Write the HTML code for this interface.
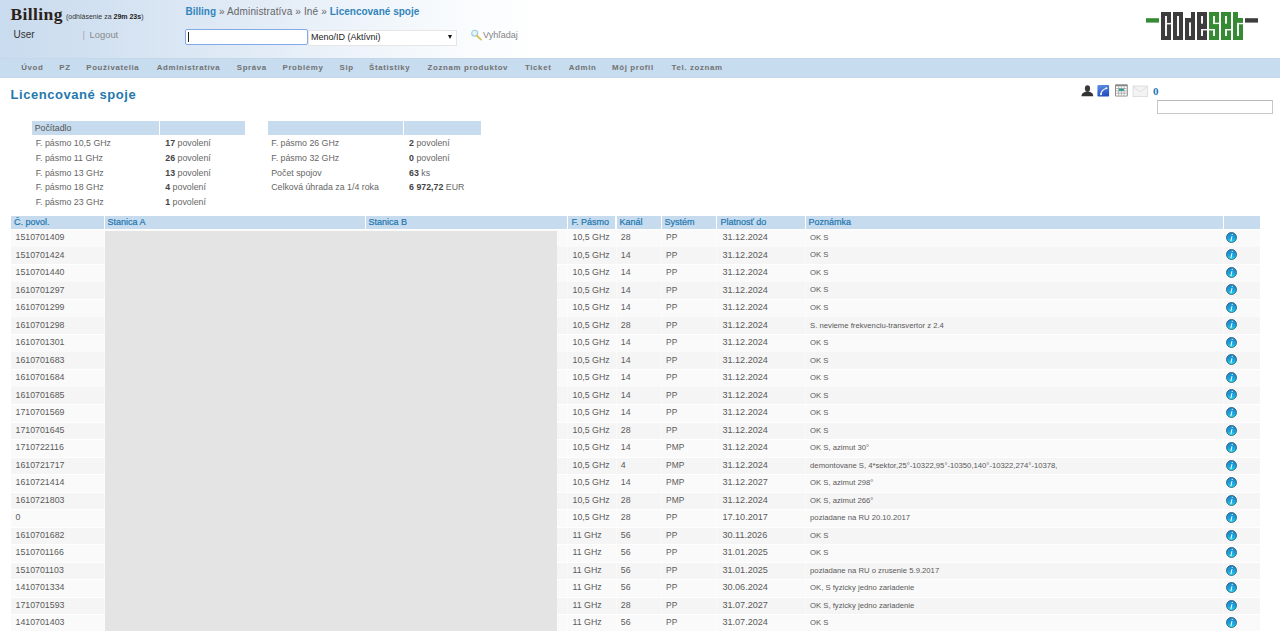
<!DOCTYPE html>
<html><head><meta charset="utf-8"><title>Licencované spoje</title>
<style>
html,body{margin:0;padding:0;background:#fff;width:1280px;height:631px;overflow:hidden;position:relative;font-family:"Liberation Sans",sans-serif;}
.abs{position:absolute;white-space:nowrap;}
#hdr{position:absolute;left:0;top:0;width:1280px;height:58px;background:linear-gradient(90deg,#c9dbee 0px,#d8e5f3 160px,#e7eff8 300px,#f8fbfd 450px,#ffffff 540px);}
#nav{position:absolute;left:0;top:57.5px;width:1280px;height:20px;background:linear-gradient(180deg,#c3d6e8 0,#c7dcee 1.5px,#c7dcee 18.5px,#c4d7e8 20px);}
.nv{position:absolute;top:63.3px;font:bold 7.9px "Liberation Sans",sans-serif;letter-spacing:0.62px;color:#727272;white-space:nowrap;line-height:10px;}
.cellbg{position:absolute;}
.t{position:absolute;white-space:nowrap;line-height:10px;}
.hd{position:absolute;white-space:nowrap;font:9px "Liberation Sans",sans-serif;-webkit-text-stroke:0.2px #2276b0;color:#2276b0;line-height:10px;}
.ct{position:absolute;white-space:nowrap;font:8.8px "Liberation Sans",sans-serif;color:#666;line-height:10px;}
.ct b{color:#444;}
</style></head><body>

<div id="hdr"></div>
<svg width="0" height="0" style="position:absolute"><defs><linearGradient id="ig" x1="0" y1="0" x2="0" y2="1"><stop offset="0" stop-color="#1e86c8"/><stop offset="0.55" stop-color="#1aa0da"/><stop offset="1" stop-color="#22e0f0"/></linearGradient></defs></svg>
<div class="abs" style="left:10.5px;top:4px;font:bold 17.5px 'Liberation Serif',serif;letter-spacing:0.4px;color:#2b2119;line-height:20px;">Billing</div>
<div class="abs" style="left:66px;top:12px;font:7px 'Liberation Sans',sans-serif;color:#333;line-height:10px;">(odhlásenie za <b style="color:#222">29m 23s</b>)</div>
<div class="abs" style="left:13.5px;top:28.5px;font:10px 'Liberation Sans',sans-serif;color:#333;line-height:12px;">User</div>
<div class="abs" style="left:82.5px;top:28.5px;font:9.4px 'Liberation Sans',sans-serif;color:#8a8a8a;line-height:12px;"><span style="color:#a9a0b0;margin-right:2px">|</span> Logout</div>
<div class="abs" style="left:185.5px;top:5.5px;font:10px 'Liberation Sans',sans-serif;color:#666;line-height:12px;"><b style="color:#3285bb">Billing</b><span style="letter-spacing:0.14px"> » Administratíva » Iné » </span><b style="color:#3285bb">Licencované spoje</b></div>
<div class="abs" style="left:185px;top:28.5px;width:121px;height:14.5px;border:1px solid #82aaea;border-radius:2px;background:#fff;"></div>
<div class="abs" style="left:188px;top:32px;width:1px;height:9.5px;background:#222;"></div>
<div class="abs" style="left:307.5px;top:29.5px;width:147.5px;height:14.5px;border:1px solid #e6e6e6;background:#fff;"></div>
<div class="abs" style="left:311px;top:31px;font:9px 'Liberation Sans',sans-serif;color:#222;line-height:12px;">Meno/ID (Aktívni)</div>
<div class="abs" style="left:447.5px;top:35px;width:0;height:0;border-left:2.2px solid transparent;border-right:2.2px solid transparent;border-top:4px solid #111;"></div>
<svg class="abs" style="left:470px;top:29px" width="14" height="13" viewBox="0 0 14 13">
<circle cx="4.7" cy="4.3" r="3" fill="#e2f5fb" stroke="#a2cadb" stroke-width="1.1"/>
<line x1="6.7" y1="6.5" x2="11" y2="10.6" stroke="#d6c35a" stroke-width="1.8" stroke-linecap="round"/></svg>
<div class="abs" style="left:483px;top:28.5px;font:9px 'Liberation Sans',sans-serif;color:#858585;line-height:12px;">Vyhľadaj</div>
<svg class="abs" style="left:0;top:0" width="1280" height="58" viewBox="0 0 1280 58"><rect x="1146" y="18.2" width="13.00" height="4.40" fill="#378a34"/><rect x="1245" y="18.2" width="13.00" height="4.40" fill="#3d3d3d"/><rect x="1161" y="12" width="10.00" height="28.00" fill="#3d3d3d"/><rect x="1165" y="16" width="2.00" height="20.00" fill="#f4f4f4"/><rect x="1165" y="22.9" width="6.00" height="1.50" fill="#f4f4f4"/><rect x="1173" y="12" width="10.00" height="28.00" fill="#3d3d3d"/><rect x="1177" y="16" width="2.00" height="20.00" fill="#f4f4f4"/><rect x="1185" y="18" width="10.00" height="22.00" fill="#3d3d3d"/><rect x="1191" y="12" width="4.00" height="6.10" fill="#3d3d3d"/><rect x="1189" y="22.4" width="2.00" height="13.60" fill="#f4f4f4"/><rect x="1197" y="12" width="10.00" height="28.00" fill="#3d3d3d"/><rect x="1201" y="16" width="2.00" height="7.70" fill="#f4f4f4"/><rect x="1201" y="29" width="6.00" height="1.40" fill="#f4f4f4"/><rect x="1201" y="29" width="2.00" height="7.00" fill="#f4f4f4"/><rect x="1209" y="12" width="10.00" height="28.00" fill="#378a34"/><rect x="1213" y="16" width="2.00" height="7.90" fill="#f4f4f4"/><rect x="1213" y="22.7" width="6.00" height="1.40" fill="#f4f4f4"/><rect x="1207" y="29" width="8.00" height="1.40" fill="#f4f4f4"/><rect x="1213" y="29" width="2.00" height="7.00" fill="#f4f4f4"/><rect x="1221" y="12" width="10.00" height="28.00" fill="#378a34"/><rect x="1225" y="16" width="2.00" height="7.70" fill="#f4f4f4"/><rect x="1225" y="29" width="6.00" height="1.40" fill="#f4f4f4"/><rect x="1225" y="29" width="2.00" height="7.00" fill="#f4f4f4"/><rect x="1233" y="12" width="5.00" height="28.00" fill="#378a34"/><rect x="1238" y="18" width="5.00" height="22.00" fill="#378a34"/><rect x="1237" y="22.9" width="6.00" height="1.40" fill="#f4f4f4"/><rect x="1237" y="22.9" width="2.00" height="13.10" fill="#f4f4f4"/></svg>
<div id="nav"></div>
<div class="nv" style="left:21.25px">Úvod</div>
<div class="nv" style="left:59.25px">PZ</div>
<div class="nv" style="left:86.25px">Používatelia</div>
<div class="nv" style="left:156.75px">Administratíva</div>
<div class="nv" style="left:236.75px">Správa</div>
<div class="nv" style="left:282.5px">Problémy</div>
<div class="nv" style="left:339.5px">Sip</div>
<div class="nv" style="left:369px">Štatistiky</div>
<div class="nv" style="left:427.6px">Zoznam produktov</div>
<div class="nv" style="left:525px">Ticket</div>
<div class="nv" style="left:568.8px">Admin</div>
<div class="nv" style="left:612px">Môj profil</div>
<div class="nv" style="left:671.6px">Tel. zoznam</div>
<div class="abs" style="left:10.5px;top:86.8px;font:bold 13px 'Liberation Sans',sans-serif;letter-spacing:0.55px;color:#2678ac;line-height:16px;">Licencované spoje</div>
<svg class="abs" style="left:1080px;top:83px" width="82" height="16" viewBox="0 0 82 16">
<defs><linearGradient id="phg" x1="0" y1="0" x2="0.3" y2="1"><stop offset="0" stop-color="#5f93e6"/><stop offset="1" stop-color="#2450bf"/></linearGradient></defs>
<ellipse cx="7.5" cy="5.6" rx="2.6" ry="3.3" fill="#3a3a3a"/>
<path d="M1.4 13.2 C1.8 10.2 4.5 8.6 7.5 8.6 C10.5 8.6 13.2 10.2 13.2 13.2 Z" fill="#333"/>
<rect x="17.4" y="2.1" width="11.7" height="11.5" rx="0.8" fill="url(#phg)"/>
<path d="M20.9 11.2 Q21.3 7.2 26.2 5.3" stroke="#f4f4f4" stroke-width="1.2" fill="none"/>
<circle cx="21" cy="11.3" r="1.05" fill="#f4f4f4"/><circle cx="26.4" cy="5.2" r="1.05" fill="#f4f4f4"/>
<rect x="35" y="1.2" width="12.8" height="12.4" rx="1" fill="#8a8a8a"/>
<rect x="36" y="3.3" width="10.8" height="9.3" fill="#fff"/>
<path d="M36 5.6H46.8M36 7.9H46.8M36 10.2H46.8M38.7 3.3V12.6M41.4 3.3V12.6M44.1 3.3V12.6" stroke="#999" stroke-width="0.7"/>
<rect x="38.9" y="5.7" width="5" height="2.1" fill="#2a9a8a"/>
<rect x="53" y="3" width="14.6" height="10.6" fill="#f3f3f3" stroke="#dcdcdc" stroke-width="0.9"/>
<path d="M53.3 3.5L60.3 9L67.3 3.5" stroke="#dcdcdc" stroke-width="0.9" fill="none"/>
</svg>
<div class="abs" style="left:1153px;top:85px;font:bold 11px 'Liberation Serif',serif;color:#2777b3;line-height:12px;">0</div>
<div class="abs" style="left:1156.5px;top:100px;width:114.5px;height:11.5px;border:1px solid #c8c8c8;border-top-color:#b8b8b8;background:#fff;"></div>
<div class="cellbg" style="left:32.2px;top:121.2px;width:126.55px;height:13.5px;background:#c6dcee"></div>
<div class="cellbg" style="left:160.25px;top:121.2px;width:84.35px;height:13.5px;background:#c6dcee"></div>
<div class="ct" style="left:34.7px;top:123px;color:#555">Počítadlo</div>
<div class="ct" style="left:35.7px;top:138.00px">F. pásmo 10,5 GHz</div>
<div class="ct" style="left:165.25px;top:138.00px"><b>17</b> povolení</div>
<div class="ct" style="left:35.7px;top:152.80px">F. pásmo 11 GHz</div>
<div class="ct" style="left:165.25px;top:152.80px"><b>26</b> povolení</div>
<div class="ct" style="left:35.7px;top:167.60px">F. pásmo 13 GHz</div>
<div class="ct" style="left:165.25px;top:167.60px"><b>13</b> povolení</div>
<div class="ct" style="left:35.7px;top:182.40px">F. pásmo 18 GHz</div>
<div class="ct" style="left:165.25px;top:182.40px"><b>4</b> povolení</div>
<div class="ct" style="left:35.7px;top:197.20px">F. pásmo 23 GHz</div>
<div class="ct" style="left:165.25px;top:197.20px"><b>1</b> povolení</div>
<div class="cellbg" style="left:267.75px;top:121.2px;width:134.85000000000002px;height:13.5px;background:#c6dcee"></div>
<div class="cellbg" style="left:404.1px;top:121.2px;width:76.89999999999998px;height:13.5px;background:#c6dcee"></div>
<div class="ct" style="left:271.25px;top:138.00px">F. pásmo 26 GHz</div>
<div class="ct" style="left:409.1px;top:138.00px"><b>2</b> povolení</div>
<div class="ct" style="left:271.25px;top:152.80px">F. pásmo 32 GHz</div>
<div class="ct" style="left:409.1px;top:152.80px"><b>0</b> povolení</div>
<div class="ct" style="left:271.25px;top:167.60px">Počet spojov</div>
<div class="ct" style="left:409.1px;top:167.60px"><b>63</b> ks</div>
<div class="ct" style="left:271.25px;top:182.40px">Celková úhrada za 1/4 roka</div>
<div class="ct" style="left:409.1px;top:182.40px"><b>6 972,72</b> EUR</div>
<div class="cellbg" style="left:11px;top:215.8px;width:92.50px;height:13.20px;background:#c6dcee"></div>
<div class="hd" style="left:14.00px;top:216.5px">Č. povol.</div>
<div class="cellbg" style="left:104.5px;top:215.8px;width:260.00px;height:13.20px;background:#c6dcee"></div>
<div class="hd" style="left:107.50px;top:216.5px">Stanica A</div>
<div class="cellbg" style="left:365.5px;top:215.8px;width:201.90px;height:13.20px;background:#c6dcee"></div>
<div class="hd" style="left:368.50px;top:216.5px">Stanica B</div>
<div class="cellbg" style="left:568.4px;top:215.8px;width:47.10px;height:13.20px;background:#c6dcee"></div>
<div class="hd" style="left:571.40px;top:216.5px">F. Pásmo</div>
<div class="cellbg" style="left:616.5px;top:215.8px;width:44.10px;height:13.20px;background:#c6dcee"></div>
<div class="hd" style="left:619.50px;top:216.5px">Kanál</div>
<div class="cellbg" style="left:661.6px;top:215.8px;width:54.80px;height:13.20px;background:#c6dcee"></div>
<div class="hd" style="left:664.60px;top:216.5px">Systém</div>
<div class="cellbg" style="left:717.4px;top:215.8px;width:87.20px;height:13.20px;background:#c6dcee"></div>
<div class="hd" style="left:720.40px;top:216.5px">Platnosť do</div>
<div class="cellbg" style="left:805.6px;top:215.8px;width:417.80px;height:13.20px;background:#c6dcee"></div>
<div class="hd" style="left:808.60px;top:216.5px">Poznámka</div>
<div class="cellbg" style="left:1224.4px;top:215.8px;width:35.60px;height:13.20px;background:#c6dcee"></div>
<div class="cellbg" style="left:11px;top:229.80px;width:1249.00px;height:16.72px;background:#fafafa"></div>
<div class="t" style="left:15.5px;top:232.00px;font:8.8px 'Liberation Sans',sans-serif;color:#5a5a5a">1510701409</div>
<div class="t" style="left:572.5px;top:232.00px;font:8.8px 'Liberation Sans',sans-serif;color:#5a5a5a">10,5 GHz</div>
<div class="t" style="left:620.8px;top:232.00px;font:8.8px 'Liberation Sans',sans-serif;color:#5a5a5a">28</div>
<div class="t" style="left:666.1px;top:232.00px;font:8.4px 'Liberation Sans',sans-serif;color:#5a5a5a">PP</div>
<div class="t" style="left:722.4px;top:232.00px;font:9.1px 'Liberation Sans',sans-serif;color:#5a5a5a">31.12.2024</div>
<div class="t" style="left:810.1px;top:232.90px;font:7.7px 'Liberation Sans',sans-serif;color:#595959">OK S</div>
<svg class="abs" style="left:1226px;top:231.80px" width="11" height="11" viewBox="0 0 11 11"><circle cx="5.5" cy="5.5" r="5" fill="url(#ig)" stroke="#24506f" stroke-width="0.8"/><path d="M6.2 2.4 L6.35 2.3 M5.9 4.5 L5 8.6" stroke="#e8fbff" stroke-width="1.1" stroke-linecap="round"/></svg>
<div class="cellbg" style="left:11px;top:247.32px;width:1249.00px;height:16.72px;background:#f5f5f5"></div>
<div class="t" style="left:15.5px;top:249.52px;font:8.8px 'Liberation Sans',sans-serif;color:#5a5a5a">1510701424</div>
<div class="t" style="left:572.5px;top:249.52px;font:8.8px 'Liberation Sans',sans-serif;color:#5a5a5a">10,5 GHz</div>
<div class="t" style="left:620.8px;top:249.52px;font:8.8px 'Liberation Sans',sans-serif;color:#5a5a5a">14</div>
<div class="t" style="left:666.1px;top:249.52px;font:8.4px 'Liberation Sans',sans-serif;color:#5a5a5a">PP</div>
<div class="t" style="left:722.4px;top:249.52px;font:9.1px 'Liberation Sans',sans-serif;color:#5a5a5a">31.12.2024</div>
<div class="t" style="left:810.1px;top:250.42px;font:7.7px 'Liberation Sans',sans-serif;color:#595959">OK S</div>
<svg class="abs" style="left:1226px;top:249.32px" width="11" height="11" viewBox="0 0 11 11"><circle cx="5.5" cy="5.5" r="5" fill="url(#ig)" stroke="#24506f" stroke-width="0.8"/><path d="M6.2 2.4 L6.35 2.3 M5.9 4.5 L5 8.6" stroke="#e8fbff" stroke-width="1.1" stroke-linecap="round"/></svg>
<div class="cellbg" style="left:11px;top:264.84px;width:1249.00px;height:16.72px;background:#fafafa"></div>
<div class="t" style="left:15.5px;top:267.04px;font:8.8px 'Liberation Sans',sans-serif;color:#5a5a5a">1510701440</div>
<div class="t" style="left:572.5px;top:267.04px;font:8.8px 'Liberation Sans',sans-serif;color:#5a5a5a">10,5 GHz</div>
<div class="t" style="left:620.8px;top:267.04px;font:8.8px 'Liberation Sans',sans-serif;color:#5a5a5a">14</div>
<div class="t" style="left:666.1px;top:267.04px;font:8.4px 'Liberation Sans',sans-serif;color:#5a5a5a">PP</div>
<div class="t" style="left:722.4px;top:267.04px;font:9.1px 'Liberation Sans',sans-serif;color:#5a5a5a">31.12.2024</div>
<div class="t" style="left:810.1px;top:267.94px;font:7.7px 'Liberation Sans',sans-serif;color:#595959">OK S</div>
<svg class="abs" style="left:1226px;top:266.84px" width="11" height="11" viewBox="0 0 11 11"><circle cx="5.5" cy="5.5" r="5" fill="url(#ig)" stroke="#24506f" stroke-width="0.8"/><path d="M6.2 2.4 L6.35 2.3 M5.9 4.5 L5 8.6" stroke="#e8fbff" stroke-width="1.1" stroke-linecap="round"/></svg>
<div class="cellbg" style="left:11px;top:282.36px;width:1249.00px;height:16.72px;background:#f5f5f5"></div>
<div class="t" style="left:15.5px;top:284.56px;font:8.8px 'Liberation Sans',sans-serif;color:#5a5a5a">1610701297</div>
<div class="t" style="left:572.5px;top:284.56px;font:8.8px 'Liberation Sans',sans-serif;color:#5a5a5a">10,5 GHz</div>
<div class="t" style="left:620.8px;top:284.56px;font:8.8px 'Liberation Sans',sans-serif;color:#5a5a5a">14</div>
<div class="t" style="left:666.1px;top:284.56px;font:8.4px 'Liberation Sans',sans-serif;color:#5a5a5a">PP</div>
<div class="t" style="left:722.4px;top:284.56px;font:9.1px 'Liberation Sans',sans-serif;color:#5a5a5a">31.12.2024</div>
<div class="t" style="left:810.1px;top:285.46px;font:7.7px 'Liberation Sans',sans-serif;color:#595959">OK S</div>
<svg class="abs" style="left:1226px;top:284.36px" width="11" height="11" viewBox="0 0 11 11"><circle cx="5.5" cy="5.5" r="5" fill="url(#ig)" stroke="#24506f" stroke-width="0.8"/><path d="M6.2 2.4 L6.35 2.3 M5.9 4.5 L5 8.6" stroke="#e8fbff" stroke-width="1.1" stroke-linecap="round"/></svg>
<div class="cellbg" style="left:11px;top:299.88px;width:1249.00px;height:16.72px;background:#fafafa"></div>
<div class="t" style="left:15.5px;top:302.08px;font:8.8px 'Liberation Sans',sans-serif;color:#5a5a5a">1610701299</div>
<div class="t" style="left:572.5px;top:302.08px;font:8.8px 'Liberation Sans',sans-serif;color:#5a5a5a">10,5 GHz</div>
<div class="t" style="left:620.8px;top:302.08px;font:8.8px 'Liberation Sans',sans-serif;color:#5a5a5a">14</div>
<div class="t" style="left:666.1px;top:302.08px;font:8.4px 'Liberation Sans',sans-serif;color:#5a5a5a">PP</div>
<div class="t" style="left:722.4px;top:302.08px;font:9.1px 'Liberation Sans',sans-serif;color:#5a5a5a">31.12.2024</div>
<div class="t" style="left:810.1px;top:302.98px;font:7.7px 'Liberation Sans',sans-serif;color:#595959">OK S</div>
<svg class="abs" style="left:1226px;top:301.88px" width="11" height="11" viewBox="0 0 11 11"><circle cx="5.5" cy="5.5" r="5" fill="url(#ig)" stroke="#24506f" stroke-width="0.8"/><path d="M6.2 2.4 L6.35 2.3 M5.9 4.5 L5 8.6" stroke="#e8fbff" stroke-width="1.1" stroke-linecap="round"/></svg>
<div class="cellbg" style="left:11px;top:317.40px;width:1249.00px;height:16.72px;background:#f5f5f5"></div>
<div class="t" style="left:15.5px;top:319.60px;font:8.8px 'Liberation Sans',sans-serif;color:#5a5a5a">1610701298</div>
<div class="t" style="left:572.5px;top:319.60px;font:8.8px 'Liberation Sans',sans-serif;color:#5a5a5a">10,5 GHz</div>
<div class="t" style="left:620.8px;top:319.60px;font:8.8px 'Liberation Sans',sans-serif;color:#5a5a5a">28</div>
<div class="t" style="left:666.1px;top:319.60px;font:8.4px 'Liberation Sans',sans-serif;color:#5a5a5a">PP</div>
<div class="t" style="left:722.4px;top:319.60px;font:9.1px 'Liberation Sans',sans-serif;color:#5a5a5a">31.12.2024</div>
<div class="t" style="left:810.1px;top:320.50px;font:7.7px 'Liberation Sans',sans-serif;color:#595959">S. nevieme frekvenciu-transvertor z 2.4</div>
<svg class="abs" style="left:1226px;top:319.40px" width="11" height="11" viewBox="0 0 11 11"><circle cx="5.5" cy="5.5" r="5" fill="url(#ig)" stroke="#24506f" stroke-width="0.8"/><path d="M6.2 2.4 L6.35 2.3 M5.9 4.5 L5 8.6" stroke="#e8fbff" stroke-width="1.1" stroke-linecap="round"/></svg>
<div class="cellbg" style="left:11px;top:334.92px;width:1249.00px;height:16.72px;background:#fafafa"></div>
<div class="t" style="left:15.5px;top:337.12px;font:8.8px 'Liberation Sans',sans-serif;color:#5a5a5a">1610701301</div>
<div class="t" style="left:572.5px;top:337.12px;font:8.8px 'Liberation Sans',sans-serif;color:#5a5a5a">10,5 GHz</div>
<div class="t" style="left:620.8px;top:337.12px;font:8.8px 'Liberation Sans',sans-serif;color:#5a5a5a">14</div>
<div class="t" style="left:666.1px;top:337.12px;font:8.4px 'Liberation Sans',sans-serif;color:#5a5a5a">PP</div>
<div class="t" style="left:722.4px;top:337.12px;font:9.1px 'Liberation Sans',sans-serif;color:#5a5a5a">31.12.2024</div>
<div class="t" style="left:810.1px;top:338.02px;font:7.7px 'Liberation Sans',sans-serif;color:#595959">OK S</div>
<svg class="abs" style="left:1226px;top:336.92px" width="11" height="11" viewBox="0 0 11 11"><circle cx="5.5" cy="5.5" r="5" fill="url(#ig)" stroke="#24506f" stroke-width="0.8"/><path d="M6.2 2.4 L6.35 2.3 M5.9 4.5 L5 8.6" stroke="#e8fbff" stroke-width="1.1" stroke-linecap="round"/></svg>
<div class="cellbg" style="left:11px;top:352.44px;width:1249.00px;height:16.72px;background:#f5f5f5"></div>
<div class="t" style="left:15.5px;top:354.64px;font:8.8px 'Liberation Sans',sans-serif;color:#5a5a5a">1610701683</div>
<div class="t" style="left:572.5px;top:354.64px;font:8.8px 'Liberation Sans',sans-serif;color:#5a5a5a">10,5 GHz</div>
<div class="t" style="left:620.8px;top:354.64px;font:8.8px 'Liberation Sans',sans-serif;color:#5a5a5a">14</div>
<div class="t" style="left:666.1px;top:354.64px;font:8.4px 'Liberation Sans',sans-serif;color:#5a5a5a">PP</div>
<div class="t" style="left:722.4px;top:354.64px;font:9.1px 'Liberation Sans',sans-serif;color:#5a5a5a">31.12.2024</div>
<div class="t" style="left:810.1px;top:355.54px;font:7.7px 'Liberation Sans',sans-serif;color:#595959">OK S</div>
<svg class="abs" style="left:1226px;top:354.44px" width="11" height="11" viewBox="0 0 11 11"><circle cx="5.5" cy="5.5" r="5" fill="url(#ig)" stroke="#24506f" stroke-width="0.8"/><path d="M6.2 2.4 L6.35 2.3 M5.9 4.5 L5 8.6" stroke="#e8fbff" stroke-width="1.1" stroke-linecap="round"/></svg>
<div class="cellbg" style="left:11px;top:369.96px;width:1249.00px;height:16.72px;background:#fafafa"></div>
<div class="t" style="left:15.5px;top:372.16px;font:8.8px 'Liberation Sans',sans-serif;color:#5a5a5a">1610701684</div>
<div class="t" style="left:572.5px;top:372.16px;font:8.8px 'Liberation Sans',sans-serif;color:#5a5a5a">10,5 GHz</div>
<div class="t" style="left:620.8px;top:372.16px;font:8.8px 'Liberation Sans',sans-serif;color:#5a5a5a">14</div>
<div class="t" style="left:666.1px;top:372.16px;font:8.4px 'Liberation Sans',sans-serif;color:#5a5a5a">PP</div>
<div class="t" style="left:722.4px;top:372.16px;font:9.1px 'Liberation Sans',sans-serif;color:#5a5a5a">31.12.2024</div>
<div class="t" style="left:810.1px;top:373.06px;font:7.7px 'Liberation Sans',sans-serif;color:#595959">OK S</div>
<svg class="abs" style="left:1226px;top:371.96px" width="11" height="11" viewBox="0 0 11 11"><circle cx="5.5" cy="5.5" r="5" fill="url(#ig)" stroke="#24506f" stroke-width="0.8"/><path d="M6.2 2.4 L6.35 2.3 M5.9 4.5 L5 8.6" stroke="#e8fbff" stroke-width="1.1" stroke-linecap="round"/></svg>
<div class="cellbg" style="left:11px;top:387.48px;width:1249.00px;height:16.72px;background:#f5f5f5"></div>
<div class="t" style="left:15.5px;top:389.68px;font:8.8px 'Liberation Sans',sans-serif;color:#5a5a5a">1610701685</div>
<div class="t" style="left:572.5px;top:389.68px;font:8.8px 'Liberation Sans',sans-serif;color:#5a5a5a">10,5 GHz</div>
<div class="t" style="left:620.8px;top:389.68px;font:8.8px 'Liberation Sans',sans-serif;color:#5a5a5a">14</div>
<div class="t" style="left:666.1px;top:389.68px;font:8.4px 'Liberation Sans',sans-serif;color:#5a5a5a">PP</div>
<div class="t" style="left:722.4px;top:389.68px;font:9.1px 'Liberation Sans',sans-serif;color:#5a5a5a">31.12.2024</div>
<div class="t" style="left:810.1px;top:390.58px;font:7.7px 'Liberation Sans',sans-serif;color:#595959">OK S</div>
<svg class="abs" style="left:1226px;top:389.48px" width="11" height="11" viewBox="0 0 11 11"><circle cx="5.5" cy="5.5" r="5" fill="url(#ig)" stroke="#24506f" stroke-width="0.8"/><path d="M6.2 2.4 L6.35 2.3 M5.9 4.5 L5 8.6" stroke="#e8fbff" stroke-width="1.1" stroke-linecap="round"/></svg>
<div class="cellbg" style="left:11px;top:405.00px;width:1249.00px;height:16.72px;background:#fafafa"></div>
<div class="t" style="left:15.5px;top:407.20px;font:8.8px 'Liberation Sans',sans-serif;color:#5a5a5a">1710701569</div>
<div class="t" style="left:572.5px;top:407.20px;font:8.8px 'Liberation Sans',sans-serif;color:#5a5a5a">10,5 GHz</div>
<div class="t" style="left:620.8px;top:407.20px;font:8.8px 'Liberation Sans',sans-serif;color:#5a5a5a">14</div>
<div class="t" style="left:666.1px;top:407.20px;font:8.4px 'Liberation Sans',sans-serif;color:#5a5a5a">PP</div>
<div class="t" style="left:722.4px;top:407.20px;font:9.1px 'Liberation Sans',sans-serif;color:#5a5a5a">31.12.2024</div>
<div class="t" style="left:810.1px;top:408.10px;font:7.7px 'Liberation Sans',sans-serif;color:#595959">OK S</div>
<svg class="abs" style="left:1226px;top:407.00px" width="11" height="11" viewBox="0 0 11 11"><circle cx="5.5" cy="5.5" r="5" fill="url(#ig)" stroke="#24506f" stroke-width="0.8"/><path d="M6.2 2.4 L6.35 2.3 M5.9 4.5 L5 8.6" stroke="#e8fbff" stroke-width="1.1" stroke-linecap="round"/></svg>
<div class="cellbg" style="left:11px;top:422.52px;width:1249.00px;height:16.72px;background:#f5f5f5"></div>
<div class="t" style="left:15.5px;top:424.72px;font:8.8px 'Liberation Sans',sans-serif;color:#5a5a5a">1710701645</div>
<div class="t" style="left:572.5px;top:424.72px;font:8.8px 'Liberation Sans',sans-serif;color:#5a5a5a">10,5 GHz</div>
<div class="t" style="left:620.8px;top:424.72px;font:8.8px 'Liberation Sans',sans-serif;color:#5a5a5a">28</div>
<div class="t" style="left:666.1px;top:424.72px;font:8.4px 'Liberation Sans',sans-serif;color:#5a5a5a">PP</div>
<div class="t" style="left:722.4px;top:424.72px;font:9.1px 'Liberation Sans',sans-serif;color:#5a5a5a">31.12.2024</div>
<div class="t" style="left:810.1px;top:425.62px;font:7.7px 'Liberation Sans',sans-serif;color:#595959">OK S</div>
<svg class="abs" style="left:1226px;top:424.52px" width="11" height="11" viewBox="0 0 11 11"><circle cx="5.5" cy="5.5" r="5" fill="url(#ig)" stroke="#24506f" stroke-width="0.8"/><path d="M6.2 2.4 L6.35 2.3 M5.9 4.5 L5 8.6" stroke="#e8fbff" stroke-width="1.1" stroke-linecap="round"/></svg>
<div class="cellbg" style="left:11px;top:440.04px;width:1249.00px;height:16.72px;background:#fafafa"></div>
<div class="t" style="left:15.5px;top:442.24px;font:8.8px 'Liberation Sans',sans-serif;color:#5a5a5a">1710722116</div>
<div class="t" style="left:572.5px;top:442.24px;font:8.8px 'Liberation Sans',sans-serif;color:#5a5a5a">10,5 GHz</div>
<div class="t" style="left:620.8px;top:442.24px;font:8.8px 'Liberation Sans',sans-serif;color:#5a5a5a">14</div>
<div class="t" style="left:666.1px;top:442.24px;font:8.4px 'Liberation Sans',sans-serif;color:#5a5a5a">PMP</div>
<div class="t" style="left:722.4px;top:442.24px;font:9.1px 'Liberation Sans',sans-serif;color:#5a5a5a">31.12.2024</div>
<div class="t" style="left:810.1px;top:443.14px;font:7.7px 'Liberation Sans',sans-serif;color:#595959">OK S, azimut 30°</div>
<svg class="abs" style="left:1226px;top:442.04px" width="11" height="11" viewBox="0 0 11 11"><circle cx="5.5" cy="5.5" r="5" fill="url(#ig)" stroke="#24506f" stroke-width="0.8"/><path d="M6.2 2.4 L6.35 2.3 M5.9 4.5 L5 8.6" stroke="#e8fbff" stroke-width="1.1" stroke-linecap="round"/></svg>
<div class="cellbg" style="left:11px;top:457.56px;width:1249.00px;height:16.72px;background:#f5f5f5"></div>
<div class="t" style="left:15.5px;top:459.76px;font:8.8px 'Liberation Sans',sans-serif;color:#5a5a5a">1610721717</div>
<div class="t" style="left:572.5px;top:459.76px;font:8.8px 'Liberation Sans',sans-serif;color:#5a5a5a">10,5 GHz</div>
<div class="t" style="left:620.8px;top:459.76px;font:8.8px 'Liberation Sans',sans-serif;color:#5a5a5a">4</div>
<div class="t" style="left:666.1px;top:459.76px;font:8.4px 'Liberation Sans',sans-serif;color:#5a5a5a">PMP</div>
<div class="t" style="left:722.4px;top:459.76px;font:9.1px 'Liberation Sans',sans-serif;color:#5a5a5a">31.12.2024</div>
<div class="t" style="left:810.1px;top:460.66px;font:7.7px 'Liberation Sans',sans-serif;color:#595959">demontovane S, 4*sektor,25°-10322,95°-10350,140°-10322,274°-10378,</div>
<svg class="abs" style="left:1226px;top:459.56px" width="11" height="11" viewBox="0 0 11 11"><circle cx="5.5" cy="5.5" r="5" fill="url(#ig)" stroke="#24506f" stroke-width="0.8"/><path d="M6.2 2.4 L6.35 2.3 M5.9 4.5 L5 8.6" stroke="#e8fbff" stroke-width="1.1" stroke-linecap="round"/></svg>
<div class="cellbg" style="left:11px;top:475.08px;width:1249.00px;height:16.72px;background:#fafafa"></div>
<div class="t" style="left:15.5px;top:477.28px;font:8.8px 'Liberation Sans',sans-serif;color:#5a5a5a">1610721414</div>
<div class="t" style="left:572.5px;top:477.28px;font:8.8px 'Liberation Sans',sans-serif;color:#5a5a5a">10,5 GHz</div>
<div class="t" style="left:620.8px;top:477.28px;font:8.8px 'Liberation Sans',sans-serif;color:#5a5a5a">14</div>
<div class="t" style="left:666.1px;top:477.28px;font:8.4px 'Liberation Sans',sans-serif;color:#5a5a5a">PMP</div>
<div class="t" style="left:722.4px;top:477.28px;font:9.1px 'Liberation Sans',sans-serif;color:#5a5a5a">31.12.2027</div>
<div class="t" style="left:810.1px;top:478.18px;font:7.7px 'Liberation Sans',sans-serif;color:#595959">OK S, azimut 298°</div>
<svg class="abs" style="left:1226px;top:477.08px" width="11" height="11" viewBox="0 0 11 11"><circle cx="5.5" cy="5.5" r="5" fill="url(#ig)" stroke="#24506f" stroke-width="0.8"/><path d="M6.2 2.4 L6.35 2.3 M5.9 4.5 L5 8.6" stroke="#e8fbff" stroke-width="1.1" stroke-linecap="round"/></svg>
<div class="cellbg" style="left:11px;top:492.60px;width:1249.00px;height:16.72px;background:#f5f5f5"></div>
<div class="t" style="left:15.5px;top:494.80px;font:8.8px 'Liberation Sans',sans-serif;color:#5a5a5a">1610721803</div>
<div class="t" style="left:572.5px;top:494.80px;font:8.8px 'Liberation Sans',sans-serif;color:#5a5a5a">10,5 GHz</div>
<div class="t" style="left:620.8px;top:494.80px;font:8.8px 'Liberation Sans',sans-serif;color:#5a5a5a">28</div>
<div class="t" style="left:666.1px;top:494.80px;font:8.4px 'Liberation Sans',sans-serif;color:#5a5a5a">PMP</div>
<div class="t" style="left:722.4px;top:494.80px;font:9.1px 'Liberation Sans',sans-serif;color:#5a5a5a">31.12.2024</div>
<div class="t" style="left:810.1px;top:495.70px;font:7.7px 'Liberation Sans',sans-serif;color:#595959">OK S, azimut 266°</div>
<svg class="abs" style="left:1226px;top:494.60px" width="11" height="11" viewBox="0 0 11 11"><circle cx="5.5" cy="5.5" r="5" fill="url(#ig)" stroke="#24506f" stroke-width="0.8"/><path d="M6.2 2.4 L6.35 2.3 M5.9 4.5 L5 8.6" stroke="#e8fbff" stroke-width="1.1" stroke-linecap="round"/></svg>
<div class="cellbg" style="left:11px;top:510.12px;width:1249.00px;height:16.72px;background:#fafafa"></div>
<div class="t" style="left:15.5px;top:512.32px;font:8.8px 'Liberation Sans',sans-serif;color:#5a5a5a">0</div>
<div class="t" style="left:572.5px;top:512.32px;font:8.8px 'Liberation Sans',sans-serif;color:#5a5a5a">10,5 GHz</div>
<div class="t" style="left:620.8px;top:512.32px;font:8.8px 'Liberation Sans',sans-serif;color:#5a5a5a">28</div>
<div class="t" style="left:666.1px;top:512.32px;font:8.4px 'Liberation Sans',sans-serif;color:#5a5a5a">PP</div>
<div class="t" style="left:722.4px;top:512.32px;font:9.1px 'Liberation Sans',sans-serif;color:#5a5a5a">17.10.2017</div>
<div class="t" style="left:810.1px;top:513.22px;font:7.7px 'Liberation Sans',sans-serif;color:#595959">poziadane na RU 20.10.2017</div>
<svg class="abs" style="left:1226px;top:512.12px" width="11" height="11" viewBox="0 0 11 11"><circle cx="5.5" cy="5.5" r="5" fill="url(#ig)" stroke="#24506f" stroke-width="0.8"/><path d="M6.2 2.4 L6.35 2.3 M5.9 4.5 L5 8.6" stroke="#e8fbff" stroke-width="1.1" stroke-linecap="round"/></svg>
<div class="cellbg" style="left:11px;top:527.64px;width:1249.00px;height:16.72px;background:#f5f5f5"></div>
<div class="t" style="left:15.5px;top:529.84px;font:8.8px 'Liberation Sans',sans-serif;color:#5a5a5a">1610701682</div>
<div class="t" style="left:572.5px;top:529.84px;font:8.8px 'Liberation Sans',sans-serif;color:#5a5a5a">11 GHz</div>
<div class="t" style="left:620.8px;top:529.84px;font:8.8px 'Liberation Sans',sans-serif;color:#5a5a5a">56</div>
<div class="t" style="left:666.1px;top:529.84px;font:8.4px 'Liberation Sans',sans-serif;color:#5a5a5a">PP</div>
<div class="t" style="left:722.4px;top:529.84px;font:9.1px 'Liberation Sans',sans-serif;color:#5a5a5a">30.11.2026</div>
<div class="t" style="left:810.1px;top:530.74px;font:7.7px 'Liberation Sans',sans-serif;color:#595959">OK S</div>
<svg class="abs" style="left:1226px;top:529.64px" width="11" height="11" viewBox="0 0 11 11"><circle cx="5.5" cy="5.5" r="5" fill="url(#ig)" stroke="#24506f" stroke-width="0.8"/><path d="M6.2 2.4 L6.35 2.3 M5.9 4.5 L5 8.6" stroke="#e8fbff" stroke-width="1.1" stroke-linecap="round"/></svg>
<div class="cellbg" style="left:11px;top:545.16px;width:1249.00px;height:16.72px;background:#fafafa"></div>
<div class="t" style="left:15.5px;top:547.36px;font:8.8px 'Liberation Sans',sans-serif;color:#5a5a5a">1510701166</div>
<div class="t" style="left:572.5px;top:547.36px;font:8.8px 'Liberation Sans',sans-serif;color:#5a5a5a">11 GHz</div>
<div class="t" style="left:620.8px;top:547.36px;font:8.8px 'Liberation Sans',sans-serif;color:#5a5a5a">56</div>
<div class="t" style="left:666.1px;top:547.36px;font:8.4px 'Liberation Sans',sans-serif;color:#5a5a5a">PP</div>
<div class="t" style="left:722.4px;top:547.36px;font:9.1px 'Liberation Sans',sans-serif;color:#5a5a5a">31.01.2025</div>
<div class="t" style="left:810.1px;top:548.26px;font:7.7px 'Liberation Sans',sans-serif;color:#595959">OK S</div>
<svg class="abs" style="left:1226px;top:547.16px" width="11" height="11" viewBox="0 0 11 11"><circle cx="5.5" cy="5.5" r="5" fill="url(#ig)" stroke="#24506f" stroke-width="0.8"/><path d="M6.2 2.4 L6.35 2.3 M5.9 4.5 L5 8.6" stroke="#e8fbff" stroke-width="1.1" stroke-linecap="round"/></svg>
<div class="cellbg" style="left:11px;top:562.68px;width:1249.00px;height:16.72px;background:#f5f5f5"></div>
<div class="t" style="left:15.5px;top:564.88px;font:8.8px 'Liberation Sans',sans-serif;color:#5a5a5a">1510701103</div>
<div class="t" style="left:572.5px;top:564.88px;font:8.8px 'Liberation Sans',sans-serif;color:#5a5a5a">11 GHz</div>
<div class="t" style="left:620.8px;top:564.88px;font:8.8px 'Liberation Sans',sans-serif;color:#5a5a5a">56</div>
<div class="t" style="left:666.1px;top:564.88px;font:8.4px 'Liberation Sans',sans-serif;color:#5a5a5a">PP</div>
<div class="t" style="left:722.4px;top:564.88px;font:9.1px 'Liberation Sans',sans-serif;color:#5a5a5a">31.01.2025</div>
<div class="t" style="left:810.1px;top:565.78px;font:7.7px 'Liberation Sans',sans-serif;color:#595959">poziadane na RU o zrusenie 5.9.2017</div>
<svg class="abs" style="left:1226px;top:564.68px" width="11" height="11" viewBox="0 0 11 11"><circle cx="5.5" cy="5.5" r="5" fill="url(#ig)" stroke="#24506f" stroke-width="0.8"/><path d="M6.2 2.4 L6.35 2.3 M5.9 4.5 L5 8.6" stroke="#e8fbff" stroke-width="1.1" stroke-linecap="round"/></svg>
<div class="cellbg" style="left:11px;top:580.20px;width:1249.00px;height:16.72px;background:#fafafa"></div>
<div class="t" style="left:15.5px;top:582.40px;font:8.8px 'Liberation Sans',sans-serif;color:#5a5a5a">1410701334</div>
<div class="t" style="left:572.5px;top:582.40px;font:8.8px 'Liberation Sans',sans-serif;color:#5a5a5a">11 GHz</div>
<div class="t" style="left:620.8px;top:582.40px;font:8.8px 'Liberation Sans',sans-serif;color:#5a5a5a">56</div>
<div class="t" style="left:666.1px;top:582.40px;font:8.4px 'Liberation Sans',sans-serif;color:#5a5a5a">PP</div>
<div class="t" style="left:722.4px;top:582.40px;font:9.1px 'Liberation Sans',sans-serif;color:#5a5a5a">30.06.2024</div>
<div class="t" style="left:810.1px;top:583.30px;font:7.7px 'Liberation Sans',sans-serif;color:#595959">OK, S fyzicky jedno zariadenie</div>
<svg class="abs" style="left:1226px;top:582.20px" width="11" height="11" viewBox="0 0 11 11"><circle cx="5.5" cy="5.5" r="5" fill="url(#ig)" stroke="#24506f" stroke-width="0.8"/><path d="M6.2 2.4 L6.35 2.3 M5.9 4.5 L5 8.6" stroke="#e8fbff" stroke-width="1.1" stroke-linecap="round"/></svg>
<div class="cellbg" style="left:11px;top:597.72px;width:1249.00px;height:16.72px;background:#f5f5f5"></div>
<div class="t" style="left:15.5px;top:599.92px;font:8.8px 'Liberation Sans',sans-serif;color:#5a5a5a">1710701593</div>
<div class="t" style="left:572.5px;top:599.92px;font:8.8px 'Liberation Sans',sans-serif;color:#5a5a5a">11 GHz</div>
<div class="t" style="left:620.8px;top:599.92px;font:8.8px 'Liberation Sans',sans-serif;color:#5a5a5a">28</div>
<div class="t" style="left:666.1px;top:599.92px;font:8.4px 'Liberation Sans',sans-serif;color:#5a5a5a">PP</div>
<div class="t" style="left:722.4px;top:599.92px;font:9.1px 'Liberation Sans',sans-serif;color:#5a5a5a">31.07.2027</div>
<div class="t" style="left:810.1px;top:600.82px;font:7.7px 'Liberation Sans',sans-serif;color:#595959">OK S, fyzicky jedno zariadenie</div>
<svg class="abs" style="left:1226px;top:599.72px" width="11" height="11" viewBox="0 0 11 11"><circle cx="5.5" cy="5.5" r="5" fill="url(#ig)" stroke="#24506f" stroke-width="0.8"/><path d="M6.2 2.4 L6.35 2.3 M5.9 4.5 L5 8.6" stroke="#e8fbff" stroke-width="1.1" stroke-linecap="round"/></svg>
<div class="cellbg" style="left:11px;top:615.24px;width:1249.00px;height:16.72px;background:#fafafa"></div>
<div class="t" style="left:15.5px;top:617.44px;font:8.8px 'Liberation Sans',sans-serif;color:#5a5a5a">1410701403</div>
<div class="t" style="left:572.5px;top:617.44px;font:8.8px 'Liberation Sans',sans-serif;color:#5a5a5a">11 GHz</div>
<div class="t" style="left:620.8px;top:617.44px;font:8.8px 'Liberation Sans',sans-serif;color:#5a5a5a">56</div>
<div class="t" style="left:666.1px;top:617.44px;font:8.4px 'Liberation Sans',sans-serif;color:#5a5a5a">PP</div>
<div class="t" style="left:722.4px;top:617.44px;font:9.1px 'Liberation Sans',sans-serif;color:#5a5a5a">31.07.2024</div>
<div class="t" style="left:810.1px;top:618.34px;font:7.7px 'Liberation Sans',sans-serif;color:#595959">OK S</div>
<svg class="abs" style="left:1226px;top:617.24px" width="11" height="11" viewBox="0 0 11 11"><circle cx="5.5" cy="5.5" r="5" fill="url(#ig)" stroke="#24506f" stroke-width="0.8"/><path d="M6.2 2.4 L6.35 2.3 M5.9 4.5 L5 8.6" stroke="#e8fbff" stroke-width="1.1" stroke-linecap="round"/></svg>
<div class="cellbg" style="left:103.5px;top:229px;width:1px;height:402px;background:#ffffff;opacity:0.45"></div>
<div class="cellbg" style="left:364.5px;top:229px;width:1px;height:402px;background:#ffffff;opacity:0.45"></div>
<div class="cellbg" style="left:567.4px;top:229px;width:1px;height:402px;background:#ffffff;opacity:0.45"></div>
<div class="cellbg" style="left:615.5px;top:229px;width:1px;height:402px;background:#ffffff;opacity:0.45"></div>
<div class="cellbg" style="left:660.6px;top:229px;width:1px;height:402px;background:#ffffff;opacity:0.45"></div>
<div class="cellbg" style="left:716.4px;top:229px;width:1px;height:402px;background:#ffffff;opacity:0.45"></div>
<div class="cellbg" style="left:804.6px;top:229px;width:1px;height:402px;background:#ffffff;opacity:0.45"></div>
<div class="cellbg" style="left:1223.4px;top:229px;width:1px;height:402px;background:#ffffff;opacity:0.45"></div>
<div class="cellbg" style="left:105.3px;top:231px;width:451.7px;height:405px;background:#e4e4e4"></div>
</body></html>
